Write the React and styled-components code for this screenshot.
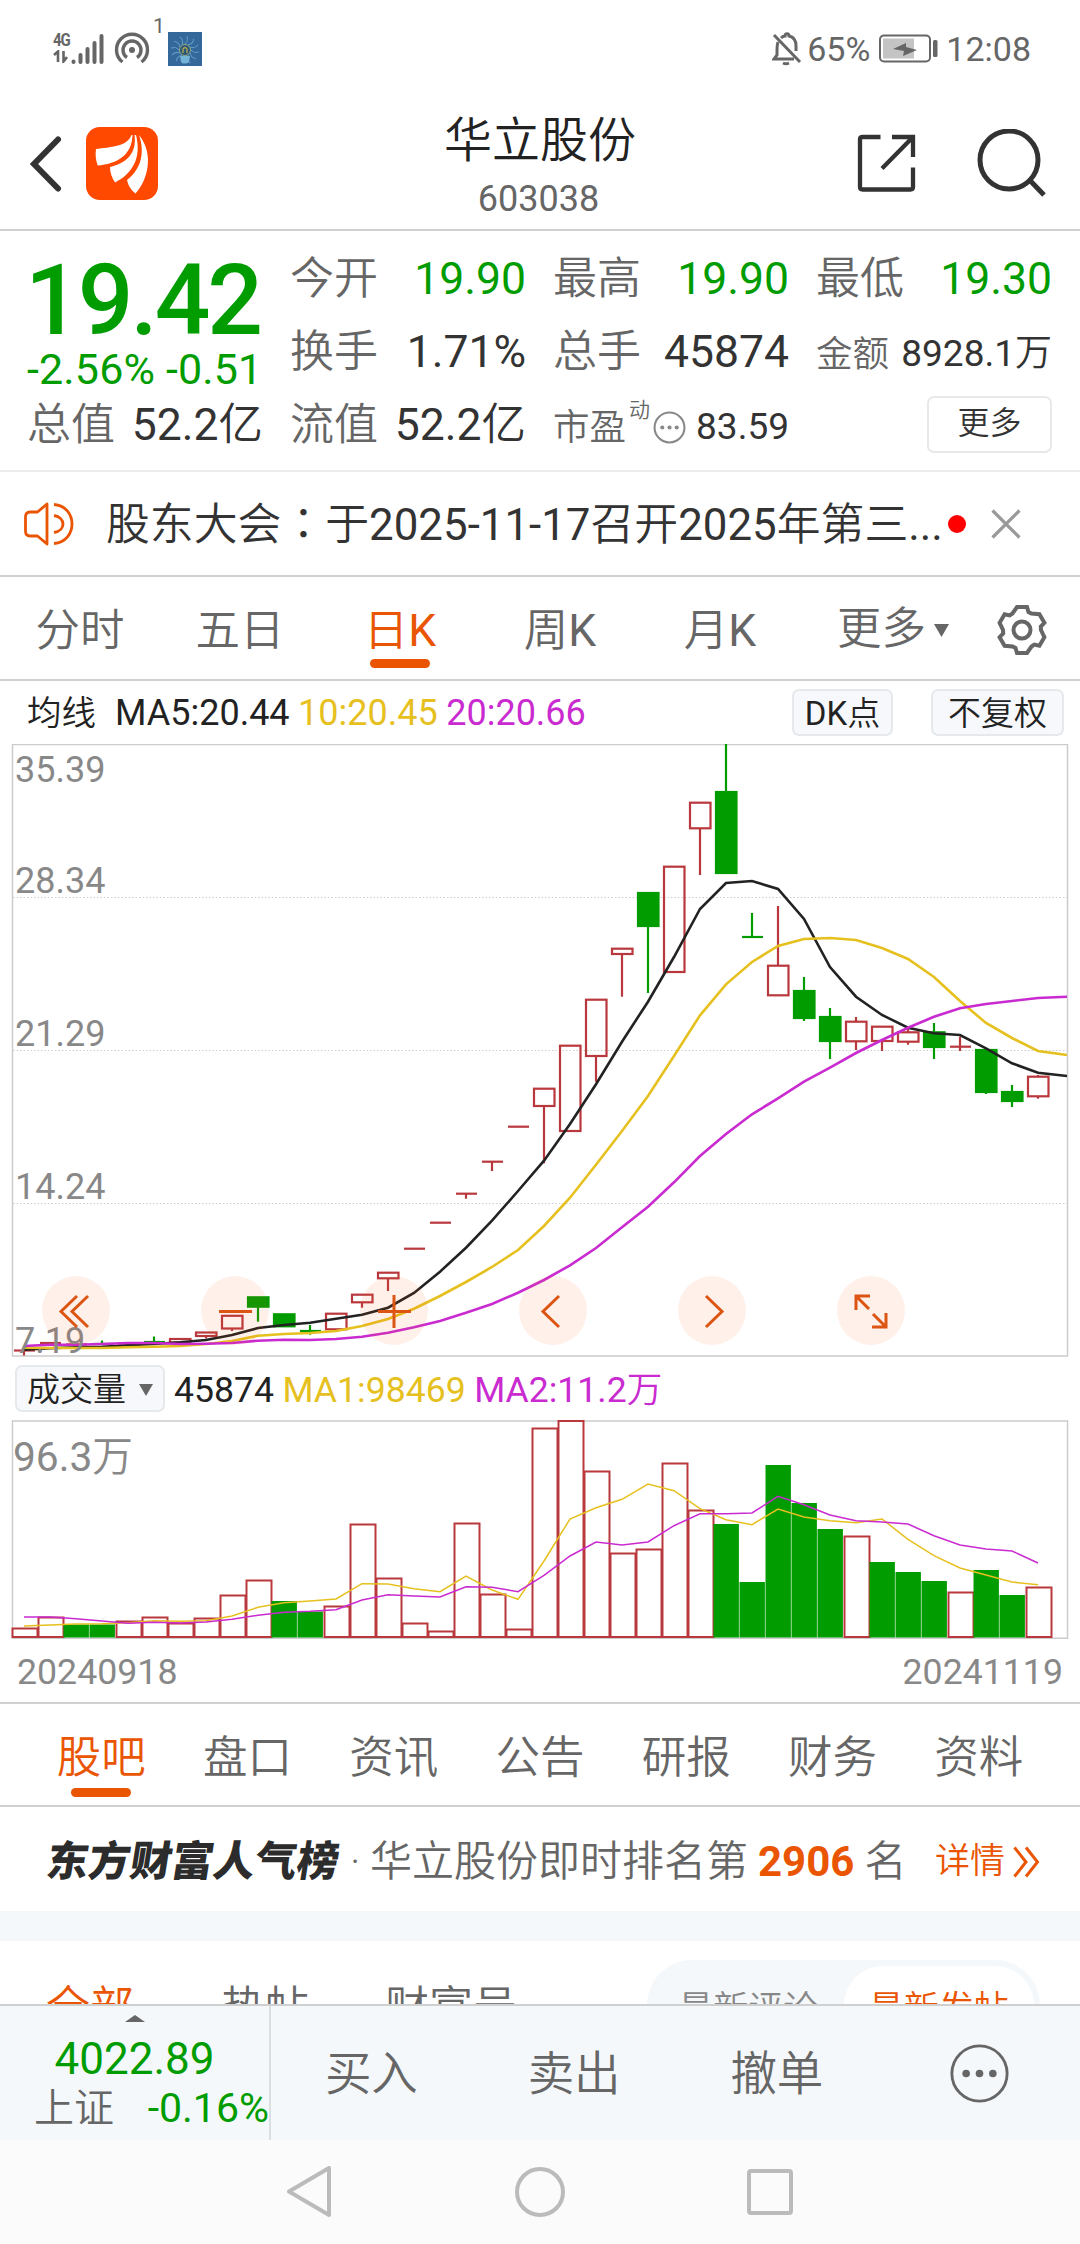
import React from "react";
import styled, { createGlobalStyle, css } from "styled-components";

const colors = {
  orange: "#ea5504",
  green: "#009c00",
  red: "#b9383d",
  yellow: "#e6c01e",
  magenta: "#c92bd0",
  text: "#333",
  grey: "#666",
  light: "#888",
  line: "#d0d0d0",
  soft: "#f5f8fb"
};

const GlobalStyle = createGlobalStyle`
  * {
    box-sizing: border-box;
  }

  body {
    margin: 0;
    background: #fff;
    color: #333;
    font-family: Roboto, "Noto Sans CJK SC", sans-serif;
    line-height: 1.2;
    white-space: nowrap;
  }

  svg {
    display: block;
    flex: none;
  }
`;

const Screen = styled.div`
  display: flex;
  flex-direction: column;
  width: 1080px;
  height: 2244px;
  overflow: hidden;
  background: #fff;
`;

// Chinese runs are set lighter than the figures beside them
const Cjk = styled.span`
  font-weight: 350;
`;

const Colon = styled.span`
  font-family: "Noto Sans CJK TC", sans-serif;
  line-height: 1;
`;

/* ---------- status bar ---------- */

const StatusBar = styled.div`
  display: flex;
  align-items: center;
  justify-content: space-between;
  height: 98px;
  padding: 0 49px 0 53px;
  color: ${colors.grey};
  font-size: 34px;
`;

const StatusGroup = styled.div`
  display: flex;
  align-items: center;
`;

const Network = styled.div`
  width: 17px;
  height: 32px;
`;

const NetworkType = styled.div`
  height: 17px;
  font-size: 15px;
  font-weight: 700;
  line-height: 15px;
  letter-spacing: -1px;
  transform: scaleY(1.25);
`;

const Hotspot = styled.div`
  margin-left: 10px;
`;

const HotspotCount = styled.sup`
  align-self: flex-start;
  width: 10px;
  margin: -18px 5px 0 3px;
  font-size: 21px;
  line-height: 24px;
`;

const BatteryText = styled.span`
  margin: 0 9px 0 5px;
`;

const Clock = styled.span`
  margin-left: 7px;
`;

/* ---------- header ---------- */

const Header = styled.header`
  display: grid;
  grid-template-columns: 300px 1fr 300px;
  align-items: center;
  height: 133px;
  border-bottom: 2px solid ${colors.line};
`;

const HeaderLeft = styled.div`
  display: flex;
  align-items: center;
  gap: 24px;
  padding-left: 28px;
`;

const HeaderRight = styled.div`
  display: flex;
  align-items: center;
  justify-content: flex-end;
  gap: 61px;
  padding-right: 33px;
`;

const HeaderTitle = styled.div`
  align-self: start;
  padding-top: 15px;
  text-align: center;
`;

const StockName = styled.div`
  color: #222;
  font-size: 48px;
  font-weight: 350;
  line-height: 56px;
`;

const StockCode = styled.div`
  margin: 5px 3px 0 0;
  color: ${colors.grey};
  font-size: 36px;
  line-height: 50px;
`;

/* ---------- quotes ---------- */

const Quotes = styled.section`
  display: grid;
  grid-template-columns: repeat(4, 236px);
  grid-template-rows: repeat(3, 73px);
  column-gap: 27px;
  height: 241px;
  padding: 12px 27px 0;
  border-bottom: 2px solid #ececec;
`;

const PriceBlock = styled.div`
  grid-row: 1 / 3;
  color: ${colors.green};
`;

const Price = styled.div`
  margin: 23px 0 0 -2px;
  font-size: 98px;
  font-weight: 500;
  line-height: 70px;
  letter-spacing: -3px;
`;

const Change = styled.div`
  margin-top: 10px;
  font-size: 43px;
  line-height: 46px;
  letter-spacing: 0.15px;
`;

const Quote = styled.div`
  display: flex;
  align-items: center;
  justify-content: space-between;
  color: ${props => props.$color || colors.text};
  font-size: ${props => (props.$small ? 37 : 44.5)}px;
  padding-top: ${props => (props.$small ? 4 : 0)}px;
`;

const QuoteLabel = styled.span`
  display: flex;
  align-items: center;
  color: ${colors.grey};
  font-size: ${props => (props.$small ? 36.5 : 44)}px;
  font-weight: 350;
`;

const Sup = styled.span`
  align-self: flex-start;
  margin: -8px 3px 0 3px;
  font-size: 21px;
  line-height: 24px;
`;

const MoreButton = styled.button`
  align-self: center;
  justify-self: end;
  width: 125px;
  height: 57px;
  margin-top: -3px;
  padding: 0 0 1px;
  border: 2px solid #e8e8e8;
  border-radius: 7px;
  background: #fff;
  color: ${colors.text};
  font: 350 32px/1.2 Roboto, "Noto Sans CJK SC", sans-serif;
`;

/* ---------- notice ---------- */

const Notice = styled.section`
  display: flex;
  align-items: center;
  height: 105px;
  padding: 0 24px;
  border-bottom: 2px solid ${colors.line};
`;

const NoticeText = styled.div`
  width: 842px;
  margin-left: 31px;
  padding-top: 3px;
  font-size: 43.85px;
`;

const Dot = styled.i`
  width: 18px;
  height: 18px;
  margin-right: 25px;
  border-radius: 50%;
  background: #f00;
`;

/* ---------- tabs ---------- */

const PeriodTabs = styled.nav`
  display: flex;
  height: 104px;
  border-bottom: 2px solid ${colors.line};
`;

const InfoTabs = styled.nav`
  display: flex;
  height: 105px;
  padding: 0 28px;
  border-top: 2px solid ${colors.line};
  border-bottom: 2px solid ${colors.line};
`;

const Tab = styled.div`
  display: flex;
  flex-direction: column;
  align-items: center;
  justify-content: space-between;
  width: ${props => props.$width}px;
  padding: ${props => props.$top}px 0 ${props => props.$bottom}px;
  color: ${colors.grey};
  font-size: 44.5px;
  line-height: 56px;

  ${props =>
    props.$active &&
    css`
      color: ${colors.orange};

      &::after {
        content: "";
        width: 60px;
        height: 9px;
        border-radius: 5px;
        background: ${colors.orange};
      }
    `}
`;

const TabMore = styled.div`
  display: flex;
  align-items: center;
  gap: 8px;
  width: 196px;
  padding: 4px 0 0 37px;
  color: ${colors.grey};
  font-size: 44.5px;
`;

const Settings = styled.div`
  padding-top: 27px;
`;

/* ---------- chart ---------- */

const Legend = styled.div`
  display: flex;
  align-items: center;
  height: 63px;
  padding: 0 16px 0 27px;
  color: #222;
  font-size: 36px;
`;

const VolumeLegend = styled(Legend)`
  padding-left: 15px;
  font-size: 35.6px;
`;

const LegendTitle = styled(Cjk)`
  width: 88px;
  padding-top: 3px;
  font-size: 34.5px;
`;

const LegendItem = styled.span`
  margin-right: 8.5px;
  padding-top: 3px;
  color: ${props => props.$color};
`;

const Chip = styled.button`
  display: flex;
  align-items: center;
  justify-content: center;
  gap: 13px;
  width: ${props => props.$width}px;
  height: 47px;
  margin-right: ${props => props.$after || 0}px;
  padding: 2px 0 0;
  border: 2px solid #e6e9ec;
  border-radius: 7px;
  background: #f6f8fb;
  color: #222;
  font: 400 33px/1.2 Roboto, "Noto Sans CJK SC", sans-serif;
`;

const Spacer = styled.div`
  flex: 1;
`;

const ChartArea = styled.div`
  position: relative;
  height: ${props => props.$height}px;
`;

// The controls float over the candles
const ChartControls = styled.div`
  position: absolute;
  left: 42px;
  bottom: 12px;
  display: flex;
  gap: 91px;
`;

const RoundButton = styled.button`
  width: 68px;
  height: 69px;
  padding: 0;
  border: 0;
  border-radius: 50%;
  background: rgba(255, 90, 20, 0.09);
`;

const Dates = styled.div`
  display: flex;
  justify-content: space-between;
  height: 63px;
  padding: 0 17px;
  color: ${colors.light};
  font-size: 35.7px;
  line-height: 66px;
`;

/* ---------- ranking ---------- */

const Ranking = styled.section`
  display: flex;
  align-items: center;
  height: 104px;
  padding: 6px 40px 0 47px;
  color: ${colors.grey};
  font-size: 42px;
  font-weight: 350;
`;

const RankTitle = styled.span`
  width: 303px;
  color: #2c2c2c;
  font-size: 41.7px;
  font-weight: 900;
  transform: skewX(-9deg);
`;

const RankDot = styled.span`
  width: 20px;
`;

const RankNumber = styled.b`
  margin: 0 10px;
  color: ${colors.orange};
  font-weight: 700;
`;

const RankLink = styled.span`
  display: flex;
  align-items: center;
  gap: 8px;
  margin-left: auto;
  color: ${colors.orange};
  font-size: 35px;
`;

const Gap = styled.div`
  height: 30px;
  background: ${colors.soft};
`;

/* ---------- post filter ---------- */

const Filters = styled.section`
  display: flex;
  align-items: flex-start;
  height: 63px;
  padding: 19px 40px 0 46px;
  overflow: hidden;
`;

const Filter = styled.div`
  width: ${props => props.$width}px;
  margin-top: 18px;
  color: ${props => (props.$active ? colors.orange : colors.grey)};
  font-size: 44px;
  font-weight: 350;
  line-height: 60px;
`;

const SortSwitch = styled.div`
  display: flex;
  width: 393px;
  height: 90px;
  margin-left: auto;
  padding: 6px;
  border-radius: 45px;
  background: ${colors.soft};
`;

const SortOption = styled.div`
  flex: 1;
  height: 78px;
  border-radius: 39px;
  background: ${props => (props.$active ? "#fff" : "transparent")};
  color: ${props => (props.$active ? colors.orange : colors.light)};
  font-size: 35px;
  font-weight: 350;
  line-height: 88px;
  text-align: center;
`;

/* ---------- bottom ---------- */

const TradeBar = styled.footer`
  display: flex;
  height: 136px;
  border-top: 2px solid ${colors.line};
  background: #f5f8fa;
`;

const Index = styled.div`
  display: flex;
  flex-direction: column;
  align-items: center;
  width: 271px;
  padding-top: 9px;
  border-right: 2px solid #dcdfe2;
  color: ${colors.green};
`;

const IndexValue = styled.div`
  margin-top: 12px;
  font-size: 44px;
  line-height: 50px;
`;

const IndexRow = styled.div`
  display: flex;
  align-items: center;
  justify-content: space-between;
  align-self: stretch;
  padding-left: 34px;
  font-size: 41px;
  line-height: 49px;
`;

const IndexName = styled.span`
  color: ${colors.grey};
  font-size: 40px;
  font-weight: 350;
`;

const TradeAction = styled.div`
  display: flex;
  flex: 1;
  align-items: center;
  justify-content: center;
  padding: 4px 2px 0 0;
  color: ${colors.grey};
  font-size: 46.5px;
  font-weight: 350;
`;

const TradeMore = styled(TradeAction)`
  padding: 0;
`;

const SystemNav = styled.div`
  display: flex;
  align-items: center;
  justify-content: center;
  gap: 182px;
  flex: 1;
  background: #fbfbfb;
`;

/* ---------- icons ---------- */

const SignalIcon = () => (
  <svg width="34" height="32" fill="none" stroke={colors.grey} strokeWidth="4" strokeLinecap="round">
    <path d="M3.5 28.5v.5M10.5 22v7M17.5 16v13M24.5 10v19M31.5 3v26" />
  </svg>
);

const DataIcon = () => (
  <svg width="17" height="13" fill="none" stroke={colors.grey} strokeWidth="2.6">
    <path d="M1 5l4-3.500V12M10.500 1v10.500L14 7" />
  </svg>
);

const HotspotIcon = () => (
  <svg width="36" height="34" fill="none" stroke={colors.grey} strokeWidth="3.4">
    <circle cx="18" cy="18" r="3" fill={colors.grey} stroke="none" />
    <path d="M13 25.500a9 9 0 1 1 10 0" />
    <path d="M8.500 30a15.500 15.500 0 1 1 19 0" />
  </svg>
);

const AppBadge = () => (
  <svg width="34" height="34" fill="none">
    <rect width="34" height="34" fill="#35689a" />
    <g stroke="#5d9cc6" strokeWidth="1">
      {[0, 30, 60, 90, 120, 150, 180, 210, 240, 270, 300, 330].map(a => (
        <path key={a} d="M17 12q4-3 2-8" transform={`rotate(${a} 17 18)`} />
      ))}
    </g>
    <path d="M12 24h10l-1 6q-4 3-8 0z" fill="#73b3d8" />
    <circle cx="17" cy="18" r="5.5" fill="#2b567c" stroke="#93a87c" />
    <path d="M15 21v-4q2-3 4 0v4" stroke="#b5a94e" strokeWidth="1.3" />
  </svg>
);

const MutedBellIcon = () => (
  <svg width="30" height="34" fill="none" stroke={colors.grey} strokeWidth="3">
    <path d="M6 10q-1 3-1 8v5l-3 4h20M9 6q2-2 4-2c0-3 4-3 4 0 5 1 7 5 7 10v5" />
    <path d="M2 3l26 27" />
    <path d="M11 31q3 1.500 6 0" />
  </svg>
);

const BatteryIcon = () => (
  <svg width="60" height="30" fill="none">
    <rect x="1" y="1.5" width="50" height="26" rx="4" stroke={colors.grey} strokeWidth="2" />
    <rect x="4" y="4.5" width="31" height="20" fill="#c4c4c4" />
    <path d="M14 15l13-6v4l11 3-14 6 1-5z" fill={colors.grey} />
    <rect x="54" y="6" width="4.5" height="17" rx="1.5" fill={colors.grey} />
  </svg>
);

const BackIcon = () => (
  <svg width="34" height="56" fill="none" stroke={colors.text} strokeWidth="6">
    <path d="M30 3.500L6 28l24 24.500" strokeLinecap="round" />
  </svg>
);

const LogoIcon = () => (
  <svg width="72" height="73" viewBox="0 0 72 73">
    <rect width="72" height="73" rx="14" fill="#ff4800" />
    <g fill="#fff">
      <path d="M45.500 8C41 20 24 20 10 22c-1 6 0 12 1.700 16.500C30 37 46 29 46.500 8z" />
      <path d="M48.500 8C51 27 40 36 24 40c0 6 2 11 5 15.500C46 47 56 31 50 8z" />
      <path d="M53 8c7 20 0 36-12 45 1 5.500 4 10 8.500 13.500C61 54 69 28 53 8z" />
    </g>
  </svg>
);

const ShareIcon = () => (
  <svg width="59" height="59" fill="none" stroke={colors.text} strokeWidth="4.3">
    <path d="M23.500 3H5.500Q3 3 3 5.500V53q0 2.500 2.500 2.500h48Q56 55.500 56 53V33.500M35 3h21v20M56 3L25 34.500" />
  </svg>
);

const SearchIcon = () => (
  <svg width="70" height="70" fill="none" stroke={colors.text} strokeWidth="5">
    <circle cx="32" cy="31" r="29" />
    <path d="M53 51.500L67 66" />
  </svg>
);

const CommentIcon = ({ size, color, strokeWidth }) => (
  <svg width={size} height={size} viewBox="0 0 32 32" fill="none" stroke={color} strokeWidth={strokeWidth}>
    <circle cx="16" cy="16" r="14.5" />
    <g fill={color} stroke="none">
      <circle cx="9" cy="16" r="2" />
      <circle cx="16" cy="16" r="2" />
      <circle cx="23" cy="16" r="2" />
    </g>
  </svg>
);

const SpeakerIcon = () => (
  <svg width="51" height="44" fill="none" stroke={colors.orange} strokeWidth="2.8" strokeLinejoin="round">
    <path d="M23 2L13.500 10H6q-4.500 0-4.500 5v14q0 5 4.500 5h7.500l9.500 8z" />
    <path d="M30 2.500c24 2 24 37 0 39M30 13.500c12 2 12 15 0 17" />
  </svg>
);

const CloseIcon = () => (
  <svg width="30" height="30" stroke="#999" strokeWidth="3.2">
    <path d="M1.500 1.500l27 27M28.500 1.500l-27 27" />
  </svg>
);

// Six teeth, each one a 60 degree turn of the same corner points
const gearPoints = [0, 60, 120, 180, 240, 300]
  .flatMap(deg => {
    const a = (deg * Math.PI) / 180;
    return [
      [-5, -23],
      [5, -23],
      [6.5, -18],
      [9.5, -16.5]
    ].map(([x, y]) => [
      (26 + x * Math.cos(a) - y * Math.sin(a)).toFixed(1),
      (26 + x * Math.sin(a) + y * Math.cos(a)).toFixed(1)
    ]);
  })
  .join(" ");

const GearIcon = () => (
  <svg width="52" height="52" fill="none" stroke={colors.grey} strokeWidth="4">
    <polygon points={gearPoints} />
    <circle cx="26" cy="26" r="8.5" />
  </svg>
);

const Arrow = ({ width, height, up, color = colors.grey }) => (
  <svg width={width} height={height} fill={color}>
    <path d={up ? `M0 ${height}h${width}L${width / 2} 0z` : `M0 0h${width}L${width / 2} ${height}z`} />
  </svg>
);

const ChevronsIcon = () => (
  <svg width="27" height="32" fill="none" stroke={colors.orange} strokeWidth="3">
    <path d="M1.500 1.500L13 16 1.500 30.500M13 1.500L24.500 16 13 30.500" />
  </svg>
);

/* ---------- chart data, y in screen px ---------- */

const STEP = 26;
const FIRST_X = 24;
const RIGHT_EDGE = 1067;
const xOf = i => (i === 40 ? RIGHT_EDGE : FIRST_X + i * STEP);

// [up, bodyTop, bodyBottom, wickTop, wickBottom]
const candles = [
  [1, 1350.5, 1350.5, 1350, 1355.5],
  [1, 1343, 1343, 1342, 1344],
  [1, 1344.5, 1344.5, 1344, 1345],
  [0, 1344, 1344, 1340.5, 1345],
  [1, 1343.5, 1343.5, 1343, 1344],
  [0, 1342, 1342, 1336.5, 1343],
  [1, 1339, 1342.5, 1339, 1343],
  [1, 1332.5, 1336, 1332, 1338.5],
  [1, 1315.8, 1328.5, 1315, 1331],
  [0, 1297.3, 1306.7, 1297, 1321.7],
  [0, 1314.3, 1326.3, 1314, 1326],
  [0, 1331, 1331, 1325, 1334.7],
  [1, 1313.7, 1329.3, 1313, 1332],
  [1, 1294.7, 1302.3, 1294, 1307.7],
  [1, 1272.7, 1278.3, 1272, 1291],
  [1, 1248.7, 1248.7, 1248, 1249],
  [1, 1222.7, 1222.7, 1222, 1223],
  [1, 1193.7, 1193.7, 1193, 1198.7],
  [1, 1161.7, 1161.7, 1161, 1171],
  [1, 1126.7, 1126.7, 1126, 1127],
  [1, 1088.7, 1106, 1088, 1163.3],
  [1, 1045.7, 1131, 1045, 1131],
  [1, 999.7, 1056, 999, 1081.7],
  [1, 948.7, 954, 948, 996.7],
  [0, 893, 926, 893, 993],
  [1, 866.7, 972, 866, 972],
  [1, 802.7, 828.3, 802, 875],
  [0, 792, 873, 744, 873],
  [0, 937, 937, 913, 937],
  [1, 965.7, 995.3, 906, 995],
  [0, 991, 1018, 977, 1021],
  [0, 1017, 1041, 1008, 1059],
  [1, 1021.7, 1041.3, 1017, 1050],
  [1, 1026.7, 1041, 1026, 1051],
  [1, 1032.3, 1041.7, 1029, 1044.7],
  [0, 1032.3, 1047, 1023, 1059],
  [1, 1046.7, 1046.7, 1036.7, 1051],
  [0, 1050, 1092, 1050, 1094],
  [0, 1092, 1101, 1085, 1107],
  [1, 1076.7, 1096.3, 1075, 1098.7]
];

const ma5 = [
  1349.7, 1348.3, 1347.3, 1346.7, 1345.3, 1344, 1342.3, 1340, 1335, 1328, 1325, 1322.7, 1318.7, 1314.7,
  1307.7, 1293, 1271.7, 1247.7, 1220.7, 1191, 1160.7, 1124, 1084.3, 1041.7, 1001.7, 957, 909, 883, 881,
  889, 919, 967, 996.7, 1015, 1027.7, 1033.3, 1035, 1048.3, 1063.3, 1072.7, 1076
];

const ma10 = [
  1347.7, 1348, 1348, 1348, 1347.3, 1346.7, 1346, 1344, 1341, 1335.7, 1334, 1333, 1331, 1326, 1319,
  1308.7, 1296, 1282, 1267, 1250, 1226, 1197.7, 1164.7, 1131, 1096, 1056, 1015.3, 984.3, 962, 946, 939,
  938, 940, 948, 959, 977, 1001, 1023, 1038, 1051, 1055
];

const ma20 = [
  1346, 1344.7, 1344.7, 1344, 1343, 1343, 1344, 1343.7, 1343, 1340.7, 1339.7, 1340, 1339, 1336.7, 1332.7,
  1327.3, 1321, 1312.7, 1304, 1292.7, 1280, 1265.3, 1248, 1227.3, 1206.7, 1182.3, 1156, 1134, 1114.3,
  1098.3, 1081.7, 1067.7, 1053, 1040, 1027.7, 1016.7, 1008.3, 1004, 1001, 998, 996.7
];

// [up, top]
const volumes = [
  [1, 1628], [1, 1617], [0, 1624.5], [0, 1624.5], [1, 1621], [1, 1617], [1, 1623], [1, 1618], [1, 1595],
  [1, 1580], [0, 1601], [0, 1611.5], [1, 1606], [1, 1524], [1, 1578], [1, 1623], [1, 1631], [1, 1523],
  [1, 1594], [1, 1629], [1, 1428], [1, 1420.5], [1, 1471], [1, 1553], [1, 1549], [1, 1463], [1, 1510],
  [0, 1524], [0, 1582], [0, 1465], [0, 1503], [0, 1529], [1, 1536], [0, 1562], [0, 1572], [0, 1581],
  [1, 1592], [0, 1570], [0, 1595], [1, 1587]
];

const volMa1 = [
  1626, 1625, 1624, 1623.7, 1622.7, 1620.7, 1621.3, 1620.7, 1616, 1607.3, 1602.7, 1601, 1599, 1583.7,
  1584, 1588.7, 1591.7, 1576, 1590, 1599.3, 1561, 1519, 1507.7, 1499.3, 1484, 1490.7, 1508.7, 1519.7,
  1524.7, 1509, 1517, 1520.7, 1522.7, 1519, 1539.3, 1555.7, 1568, 1575, 1582, 1584.7
];

const volMa2 = [
  1617, 1617, 1618.7, 1621, 1623.3, 1622.3, 1623, 1622, 1619.3, 1615.3, 1612.3, 1611.3, 1609.7, 1600,
  1594.7, 1596, 1597, 1586.7, 1587.3, 1591.7, 1575.3, 1556, 1542, 1545, 1542, 1525.7, 1513.7, 1513.7,
  1513, 1496.3, 1504.7, 1515, 1520.7, 1522, 1524, 1535.7, 1545, 1549, 1551, 1563
];

const prices = [
  ["35.39", 782],
  ["28.34", 893],
  ["21.29", 1046],
  ["14.24", 1199],
  ["7.19", 1353]
];

const pointsOf = values => values.map((y, i) => `${xOf(i)},${y}`).join(" ");

const AxisText = styled.text`
  fill: ${colors.light};
  font-size: ${props => props.$size || 36}px;
`;

const Candle = ({ x, data }) => {
  const [up, top, bottom, high, low] = data;
  const color = up ? colors.red : colors.green;
  const body = Math.max(bottom - top, 0);

  return (
    <g stroke={color} strokeWidth="2.2">
      {high < top && <path d={`M${x} ${high}V${top}`} />}
      {low > bottom && <path d={`M${x} ${bottom}V${low}`} />}
      {body === 0 ? (
        <path d={`M${x - 10} ${top}h21`} />
      ) : (
        <rect x={x - 10} y={top} width="20.5" height={body} fill={up ? "none" : color} />
      )}
    </g>
  );
};

const PriceChart = () => (
  <svg width="1080" height="613" viewBox="0 744 1080 613">
    <path d="M12.500 744.500h1055v611.500h-1055z" fill="none" stroke="#ccc" strokeWidth="1.5" />
    {[897.5, 1050.5, 1203.5].map(y => (
      <path key={y} d={`M13 ${y}h1054`} stroke="#ccc" strokeDasharray="1.5 2" />
    ))}
    {candles.map((data, i) => (
      <Candle key={i} x={xOf(i)} data={data} />
    ))}
    <g fill="none" strokeWidth="2.6">
      <polyline points={pointsOf(ma5)} stroke="#222" />
      <polyline points={pointsOf(ma10)} stroke={colors.yellow} />
      <polyline points={pointsOf(ma20)} stroke={colors.magenta} />
    </g>
    {prices.map(([label, y]) => (
      <AxisText key={label} x="15" y={y}>
        {label}
      </AxisText>
    ))}
  </svg>
);

const VolumeChart = () => (
  <svg width="1080" height="219" viewBox="0 1420 1080 219">
    <path d="M12.500 1421h1055v217.300h-1055z" fill="none" stroke="#ccc" strokeWidth="1.5" />
    {volumes.map(([up, top], i) =>
      up ? (
        <rect
          key={i}
          x={xOf(i) - 11.5}
          y={top + 0.5}
          width="25"
          height={1636.5 - top}
          fill="#fff"
          stroke={colors.red}
          strokeWidth="2"
        />
      ) : (
        <rect key={i} x={xOf(i) - 12.5} y={top} width="25.4" height={1637.5 - top} fill={colors.green} />
      )
    )}
    <g fill="none" strokeWidth="1.5">
      <polyline points={pointsOf(volMa1)} stroke={colors.yellow} />
      <polyline points={pointsOf(volMa2)} stroke={colors.magenta} />
    </g>
    <AxisText $size={40.7} x="13" y="1471">
      96.3<tspan fontWeight="350">万</tspan>
    </AxisText>
  </svg>
);

const controls = [
  "M35 20L19 35.500 35 51M46 20L30 35.500 46 51",
  "M18 35.500h33",
  "M18 35.500h33M34 19v33",
  "M40 20L24 35.500 40 51",
  "M28 20L44 35.500 28 51",
  "M19 34V20h14M20 21l12 12M49 37v14H35M48 50L36 38"
];

const periodTabs = [["分时"], ["五日"], ["日", "K"], ["周", "K"], ["月", "K"]];
const infoTabs = ["股吧", "盘口", "资讯", "公告", "研报", "财务", "资料"];

const App = () => (
  <>
    <GlobalStyle />
    <Screen>
      <StatusBar>
        <StatusGroup>
          <Network>
            <NetworkType>4G</NetworkType>
            <DataIcon />
          </Network>
          <SignalIcon />
          <Hotspot>
            <HotspotIcon />
          </Hotspot>
          <HotspotCount>1</HotspotCount>
          <AppBadge />
        </StatusGroup>
        <StatusGroup>
          <MutedBellIcon />
          <BatteryText>65%</BatteryText>
          <BatteryIcon />
          <Clock>12:08</Clock>
        </StatusGroup>
      </StatusBar>

      <Header>
        <HeaderLeft>
          <BackIcon />
          <LogoIcon />
        </HeaderLeft>
        <HeaderTitle>
          <StockName>华立股份</StockName>
          <StockCode>603038</StockCode>
        </HeaderTitle>
        <HeaderRight>
          <ShareIcon />
          <SearchIcon />
        </HeaderRight>
      </Header>

      <Quotes>
        <PriceBlock>
          <Price>19.42</Price>
          <Change>-2.56% -0.51</Change>
        </PriceBlock>
        <Quote $color={colors.green}>
          <QuoteLabel>今开</QuoteLabel>19.90
        </Quote>
        <Quote $color={colors.green}>
          <QuoteLabel>最高</QuoteLabel>19.90
        </Quote>
        <Quote $color={colors.green}>
          <QuoteLabel>最低</QuoteLabel>19.30
        </Quote>
        <Quote>
          <QuoteLabel>换手</QuoteLabel>1.71%
        </Quote>
        <Quote>
          <QuoteLabel>总手</QuoteLabel>45874
        </Quote>
        <Quote $small>
          <QuoteLabel $small>金额</QuoteLabel>
          <span>
            8928.1<Cjk>万</Cjk>
          </span>
        </Quote>
        <Quote>
          <QuoteLabel>总值</QuoteLabel>
          <span>
            52.2<Cjk>亿</Cjk>
          </span>
        </Quote>
        <Quote>
          <QuoteLabel>流值</QuoteLabel>
          <span>
            52.2<Cjk>亿</Cjk>
          </span>
        </Quote>
        <Quote $small>
          <QuoteLabel $small>
            市盈
            <Sup>动</Sup>
            <CommentIcon size={33} color="#888" strokeWidth={2} />
          </QuoteLabel>
          83.59
        </Quote>
        <MoreButton>更多</MoreButton>
      </Quotes>

      <Notice>
        <SpeakerIcon />
        <NoticeText>
          <Cjk>
            股东大会<Colon>：</Colon>于
          </Cjk>
          2025-11-17<Cjk>召开</Cjk>2025<Cjk>年第三</Cjk>...
        </NoticeText>
        <Dot />
        <CloseIcon />
      </Notice>

      <PeriodTabs>
        {periodTabs.map(([cjk, latin]) => (
          <Tab key={cjk} $width={160} $top={26} $bottom={11} $active={cjk === "日"}>
            <span>
              <Cjk>{cjk}</Cjk>
              {latin}
            </span>
          </Tab>
        ))}
        <TabMore>
          <Cjk>更多</Cjk>
          <Arrow width={15} height={13} />
        </TabMore>
        <Settings>
          <GearIcon />
        </Settings>
      </PeriodTabs>

      <Legend>
        <LegendTitle>均线</LegendTitle>
        <LegendItem>MA5:20.44</LegendItem>
        <LegendItem $color={colors.yellow}>10:20.45</LegendItem>
        <LegendItem $color={colors.magenta}>20:20.66</LegendItem>
        <Spacer />
        <Chip $width={101} $after={38}>
          <span>
            DK<Cjk>点</Cjk>
          </span>
        </Chip>
        <Chip $width={133}>
          <Cjk>不复权</Cjk>
        </Chip>
      </Legend>
      <ChartArea $height={613}>
        <PriceChart />
        <ChartControls>
          {controls.map(d => (
            <RoundButton key={d}>
              <svg width="68" height="69" fill="none" stroke="#dc5512" strokeWidth="3">
                <path d={d} />
              </svg>
            </RoundButton>
          ))}
        </ChartControls>
      </ChartArea>
      <VolumeLegend>
        <Chip $width={150} $after={9}>
          <Cjk>成交量</Cjk>
          <Arrow width={14} height={12} />
        </Chip>
        <LegendItem>45874</LegendItem>
        <LegendItem $color={colors.yellow}>MA1:98469</LegendItem>
        <LegendItem $color={colors.magenta}>
          MA2:11.2<Cjk>万</Cjk>
        </LegendItem>
      </VolumeLegend>
      <ChartArea $height={219}>
        <VolumeChart />
      </ChartArea>
      <Dates>
        <span>20240918</span>
        <span>20241119</span>
      </Dates>

      <InfoTabs>
        {infoTabs.map((label, i) => (
          <Tab key={label} $width={146.3} $top={26} $bottom={8} $active={i === 0}>
            <Cjk>{label}</Cjk>
          </Tab>
        ))}
      </InfoTabs>

      <Ranking>
        <RankTitle>东方财富人气榜</RankTitle>
        <RankDot>·</RankDot>
        华立股份即时排名第
        <RankNumber>2906</RankNumber>名
        <RankLink>
          详情
          <ChevronsIcon />
        </RankLink>
      </Ranking>
      <Gap />

      <Filters>
        <Filter $width={175} $active>
          全部
        </Filter>
        <Filter $width={164}>热帖</Filter>
        <Filter $width={140}>财富号</Filter>
        <SortSwitch>
          <SortOption>最新评论</SortOption>
          <SortOption $active>最新发帖</SortOption>
        </SortSwitch>
      </Filters>

      <TradeBar>
        <Index>
          <Arrow up width={20} height={7} />
          <IndexValue>4022.89</IndexValue>
          <IndexRow>
            <IndexName>上证</IndexName>-0.16%
          </IndexRow>
        </Index>
        <TradeAction>买入</TradeAction>
        <TradeAction>卖出</TradeAction>
        <TradeAction>撤单</TradeAction>
        <TradeMore>
          <CommentIcon size={61} color={colors.grey} strokeWidth={1.5} />
        </TradeMore>
      </TradeBar>

      <SystemNav>
        <svg width="46" height="52" fill="none" stroke="#bbb" strokeWidth="4" strokeLinejoin="round">
          <path d="M42 2v47L2 25.500z" />
        </svg>
        <svg width="50" height="50" fill="none" stroke="#bbb" strokeWidth="4">
          <circle cx="25" cy="25" r="23" />
        </svg>
        <svg width="46" height="46" fill="none" stroke="#bbb" strokeWidth="4">
          <rect x="2" y="2" width="42" height="42" rx="2" />
        </svg>
      </SystemNav>
    </Screen>
  </>
);

export default App;
